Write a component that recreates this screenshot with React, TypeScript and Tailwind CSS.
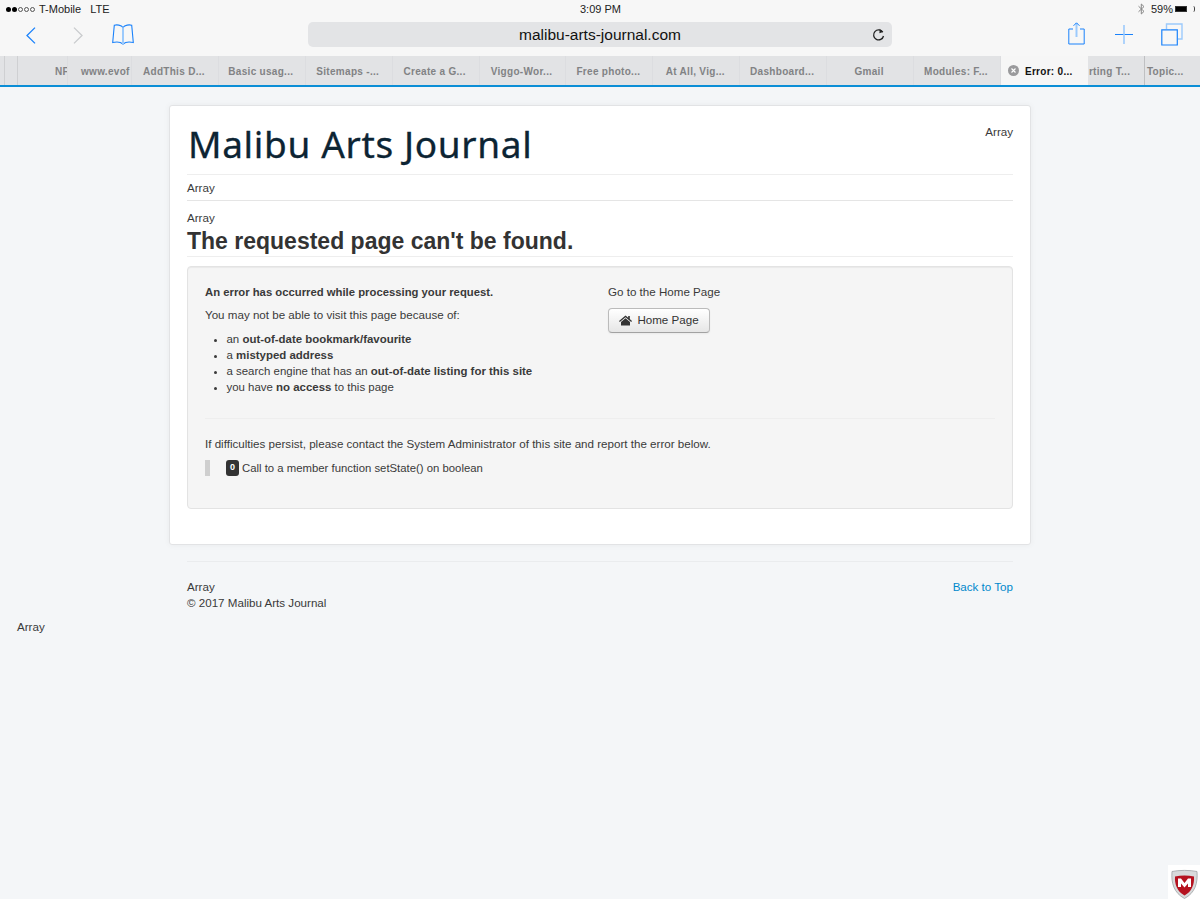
import React from 'react';

const tabs = [
  'AddThis D...',
  'Basic usag...',
  'Sitemaps -...',
  'Create a G...',
  'Viggo-Wor...',
  'Free photo...',
  'At All, Vig...',
  'Dashboard...',
  'Gmail',
  'Modules: F...',
];

function StatusBar() {
  return (
    <div className="h-[18px] flex items-center justify-between pl-[6px] pr-[5px] text-[11px] text-[#222] relative">
      <div className="flex items-center">
        <div className="flex gap-[1px]">
          {[1, 2].map((i) => (
            <span key={i} className="w-[5px] h-[5px] rounded-full bg-black" />
          ))}
          {[3, 4, 5].map((i) => (
            <span key={i} className="w-[5px] h-[5px] rounded-full border-[0.5px] border-[#555]" />
          ))}
        </div>
        <span className="ml-[4px]">T-Mobile</span>
        <span className="ml-[9px]">LTE</span>
      </div>
      <span className="absolute left-[580px] top-[1px] font-medium">3:09 PM</span>
      <div className="flex items-center">
        <svg width="7" height="12" viewBox="0 0 7 12" fill="none" stroke="#888" strokeWidth="1">
          <path d="M0.5 3.2 6 8.4 3.3 11V1L6 3.6 0.5 8.8" />
        </svg>
        <span className="ml-[6px]">59%</span>
        <span className="ml-[2px] w-[12px] h-[6px] bg-black border border-[#333]" />
        <span className="ml-[6px] w-[2px] h-[6px] border-r border-[#444] rounded-r-full" />
      </div>
    </div>
  );
}

function Toolbar() {
  return (
    <div className="h-[38px] flex items-start">
      <div className="w-[308px] h-[30px] flex items-start relative shrink-0">
        <svg className="ml-[26px] mt-[9px]" width="10" height="17" viewBox="0 0 10 17" fill="none" stroke="#1a82fb" strokeWidth="1.3">
          <path d="M9 .6 1 8.5 9 16.4" />
        </svg>
        <svg className="ml-[37px] mt-[9px]" width="10" height="17" viewBox="0 0 10 17" fill="none" stroke="#c9cbcd" strokeWidth="1.3">
          <path d="M1 .6 9 8.5 1 16.4" />
        </svg>
        <svg className="ml-[29px] mt-[6px]" width="22" height="21" viewBox="0 0 22 21" fill="none" stroke="#1a82fb" strokeWidth="1.1">
          <path d="M11 3.5C9.2 .8 4.6 .6 2.3 1.2L.7 18.5C4.6 17.6 8.7 18 11 20 13.3 18 17.4 17.6 21.3 18.5L19.7 1.2C17.4 .6 12.8 .8 11 3.5Z" />
          <path d="M11 3.5V20" stroke="#9ccafc" strokeWidth="2" />
        </svg>
      </div>
      <div className="w-[584px] h-[25px] mt-[4px] rounded-[5px] bg-[#e3e4e6] flex items-center justify-center relative shrink-0 text-[15.5px] text-[#111]">
        malibu-arts-journal.com
        <svg className="absolute right-[7px] top-[6px]" width="13" height="14" viewBox="0 0 13 14" fill="none" stroke="#222" strokeWidth="1.3">
          <path d="M10.8 4.2A5 5 0 1 0 11.5 8" />
          <path d="M7.7 .8 11 3.9 7.4 5.2" fill="#222" stroke="none" />
        </svg>
      </div>
      <div className="flex-1 flex items-start">
        <svg className="ml-[176px] mt-[4px]" width="17" height="23" viewBox="0 0 17 23" fill="none" stroke="#1a82fb" strokeWidth="1">
          <path d="M5 7H.8V22H16.2V7H12" />
          <path d="M8.5 15V1" stroke="#9ccafc" strokeWidth="2" />
          <path d="M5.5 3.8 8.5 .8 11.5 3.8" />
        </svg>
        <svg className="ml-[30px] mt-[7px]" width="18" height="19" viewBox="0 0 18 19" fill="none" stroke="#1a82fb" strokeWidth="1">
          <path d="M0 9.5H18" />
          <path d="M9 0V19" stroke="#9ccafc" strokeWidth="1.6" />
        </svg>
        <svg className="ml-[28px] mt-[5px]" width="22" height="23" viewBox="0 0 22 23" fill="none" stroke="#1a82fb" strokeWidth="1">
          <path d="M5.5 6V1H21V16H17" stroke="#9ccafc" strokeWidth="1.4" />
          <path d="M.8 6.8H16.3V22H.8Z" strokeWidth="1.2" />
        </svg>
      </div>
    </div>
  );
}

function TabBar() {
  return (
    <div className="h-[31px] bg-[#e2e3e5] border-b-2 border-[#0b8ed6] flex items-stretch text-[10px] tracking-[0.3px] font-bold text-[#818284]">
      <div className="w-[5px] border-r border-[#cfd0d2]" />
      <div className="w-[13px] border-r border-[#cfd0d2]" />
      <div className="w-[50px] pl-[37px] pt-[8px] overflow-hidden border-r border-[#dcdde0] whitespace-nowrap">NF</div>
      <div className="w-[64px] pl-[13px] pt-[8px] overflow-hidden border-r border-[#dcdde0] whitespace-nowrap">www.evof</div>
      {tabs.map((t) => (
        <div key={t} className="w-[86.9px] pt-[8px] pr-[2px] text-center border-r border-[#dcdde0] whitespace-nowrap">
          {t}
        </div>
      ))}
      <div className="w-[87px] bg-[#f6f6f6] flex items-start pt-[8px] text-[#111] relative">
        <span className="ml-[7px] mt-[1px] w-[11px] h-[11px] rounded-full bg-[#9a9a9c] text-white flex items-center justify-center">
          <svg width="5" height="5" viewBox="0 0 5 5" stroke="#fff" strokeWidth="1.1">
            <path d="M.5 .5 4.5 4.5M4.5 .5 .5 4.5" />
          </svg>
        </span>
        <span className="ml-[6px]">Error: 0...</span>
      </div>
      <div className="w-[57px] pl-[1px] pt-[8px] border-r border-[#bfc0c2] whitespace-nowrap">rting T...</div>
      <div className="flex-1 pl-[2px] pt-[8px] whitespace-nowrap">Topic...</div>
    </div>
  );
}

function ErrorPanel() {
  return (
    <div className="mt-[9px] h-[243px] bg-[#f5f5f5] border border-[#e3e3e3] rounded-[4px] pt-[18px] pl-[17px] pr-[17px] shadow-[inset_0_1px_1px_rgba(0,0,0,0.05)]">
      <div className="flex h-[133px]">
        <div className="w-[403px]">
          <p className="font-bold text-[11.3px] leading-[14px]">An error has occurred while processing your request.</p>
          <p className="mt-[9px] leading-[14px]">You may not be able to visit this page because of:</p>
          <ul className="mt-[9px] pl-[21.5px] list-disc leading-[16px] text-[11.45px]">
            <li>an <b>out-of-date bookmark/favourite</b></li>
            <li>a <b>mistyped address</b></li>
            <li>a search engine that has an <b>out-of-date listing for this site</b></li>
            <li>you have <b>no access</b> to this page</li>
          </ul>
        </div>
        <div>
          <p className="leading-[14px]">Go to the Home Page</p>
          <button className="mt-[9px] w-[102px] h-[25px] pb-[1px] rounded-[4px] border border-[#bbb] border-b-[#a2a2a2] bg-gradient-to-b from-white to-[#e6e6e6] shadow-[0_1px_2px_rgba(0,0,0,0.05)] flex items-center justify-center text-[#333]">
            <svg width="13" height="11" viewBox="0 0 13 11" fill="#333" className="mr-[5px]">
              <path d="M6.5 .5 0 6 .8 7 6.5 2.3 12.2 7 13 6 10.8 4.1V1H9.2V2.7ZM2 7 6.5 3.3 11 7V10.5H2Z" />
            </svg>
            Home Page
          </button>
        </div>
      </div>
      <div className="border-t border-[#eeeeee] pt-[18px]">
        <p className="leading-[14px]">If difficulties persist, please contact the System Administrator of this site and report the error below.</p>
        <div className="mt-[9px] h-[16px] border-l-[5px] border-[#cfcfcf] pl-[16px] flex items-center">
          <span className="w-[13px] h-[16px] rounded-[3px] bg-[#333] text-white text-[9px] font-bold flex items-center justify-center">0</span>
          <span className="ml-[3px] text-[11.35px]">Call to a member function setState() on boolean</span>
        </div>
      </div>
    </div>
  );
}

export default function App() {
  return (
    <div className="w-[1200px] h-[899px] bg-[#f4f6f8] relative overflow-hidden font-['Liberation_Sans',Arial,sans-serif] text-[11.6px] text-[#3a3a3a]">
      <div className="bg-[#f7f7f7]">
        <StatusBar />
        <Toolbar />
      </div>
      <TabBar />

      <main className="w-[862px] ml-[169px] mt-[18px] h-[440px] bg-white border border-[#e2e3e5] rounded-[3px] shadow-[0_0_6px_rgba(0,0,0,0.05)] px-[17px] pt-[17px]">
        <div className="flex justify-between h-[52px] border-b border-[#eeeeee]">
          <h1 className="font-['Noto_Sans',sans-serif] text-[37px] leading-[42px] tracking-[0.65px] text-[#0c2433] pl-[1px] [-webkit-text-stroke:0.3px_#0c2433]">Malibu Arts Journal</h1>
          <span>Array</span>
        </div>
        <div className="h-[26px] border-b border-[#e5e5e5] pt-[4px]">Array</div>
        <div className="h-[56px] border-b border-[#eeeeee] pt-[10px]">
          <p className="leading-[14px]">Array</p>
          <h2 className="text-[23px] leading-[24px] mt-[4px] font-bold text-[#333]">The requested page can't be found.</h2>
        </div>
        <ErrorPanel />
      </main>

      <footer className="w-[826px] ml-[187px] mt-[16px] border-t border-[#eaecee] pt-[17px] flex justify-between leading-[16px]">
        <div>
          <p>Array</p>
          <p>© 2017 Malibu Arts Journal</p>
        </div>
        <a href="#" className="text-[#0088cc]">Back to Top</a>
      </footer>
      <p className="ml-[17px] mt-[8px] leading-[16px]">Array</p>

      <div className="absolute left-[1168px] top-[865px] w-[32px] h-[34px] bg-white flex items-start justify-center pt-[4px]">
        <svg width="27" height="30" viewBox="0 0 27 30">
          <path d="M1 2.5C8 1 19 1 26 2.5 27 14 24 24 13.5 29.5 3 24 0 14 1 2.5Z" fill="#d8dadb" stroke="#9ea2a4" strokeWidth=".8" />
          <path d="M4 7.5C10 6.2 17 6.2 23 7.5 23.5 15 21 22.5 13.5 26.5 6 22.5 3.5 15 4 7.5Z" fill="#b5121f" />
          <path d="M7 18V9.5H10L13.5 14 17 9.5H20V18H17V14.5L13.5 18.5 10 14.5V18Z" fill="#fff" />
        </svg>
      </div>
    </div>
  );
}
